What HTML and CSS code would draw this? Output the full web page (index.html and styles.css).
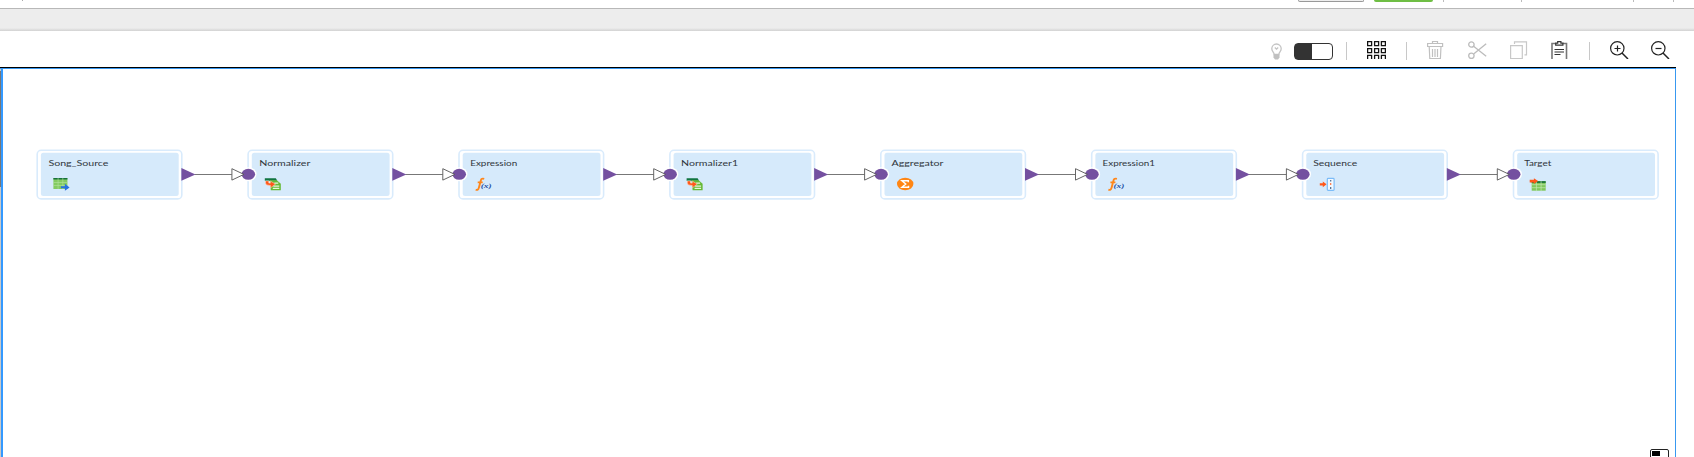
FILE: index.html
```
<!DOCTYPE html>
<html lang="en">
<head>
<meta charset="utf-8">
<title>Mapping designer</title>
<link rel="stylesheet" href="styles.css">
</head>
<body>
<header class="header">
  <i class="tick"></i>
  <i class="btn"></i><i class="btn primary"></i>
  <i class="sep s1"></i><i class="sep s2"></i><i class="sep s3"></i><i class="sep s4"></i>
</header>
<div class="band"></div>
<nav class="toolbar">
  <svg class="bulb" width="11" height="18" viewBox="0 0 11 18" fill="none" stroke="#c4c4c4" stroke-width="1.300"><path d="M3.200 11.500C3 9.200.8 8.300.8 5.700A4.700 4.700 0 0 1 10.200 5.700C10.200 8.300 8 9.200 7.800 11.500ZM3.800 4.500l1.700 1.700 1.700-1.700"/><path d="M2.500 11.300h6v3.200l-1.500 2H4l-1.500-2z" fill="#c0c0c0" stroke="none"/></svg>
  <span class="toggle"></span>
  <i class="divider"></i>
  <svg class="grid" width="19" height="18" viewBox="0 0 19 18" fill="none" stroke="#111" stroke-width="1.300"><path d="M.6.6h4v4h-4zM7.600.6h4v4h-4zM14.400.6h4v4h-4zM.6 7.600h4v4h-4zM7.600 7.600h4v4h-4zM14.400 7.600h4v4h-4zM.6 14.300h4v5h-4zM7.600 14.300h4v5h-4zM14.400 14.300h4v5h-4z"/></svg>
  <i class="divider"></i>
  <svg class="trash" width="17" height="18" viewBox="0 0 17 18" fill="none" stroke="#c0c0c0" stroke-width="1.200"><path d="M.6 2.500h15v3H.6zM5.500 2.500v-2h5v2M2.200 5.500l.6 12.200h10.600l.6-12.200M5.500 8v8M8 8v8M10.500 8v8"/></svg>
  <svg class="cut" width="19" height="18" viewBox="0 0 19 18" fill="none" stroke="#bcbcbc" stroke-width="1.300"><circle cx="3.400" cy="3.500" r="2.700"/><circle cx="3.400" cy="14.800" r="2.700"/><path d="M5.600 5.300l12.600 9.900M5.600 13L18.200 2.700"/></svg>
  <svg class="copy" width="18" height="18" viewBox="0 0 18 18" fill="none" stroke="#c8c8c8" stroke-width="1.200"><path d="M.6 4.600h11.700v13H.6zM4.500 3V.8h12v13h-2"/></svg>
  <svg class="paste" width="17" height="18" viewBox="0 0 17 18" fill="none" stroke="#333" stroke-width="1.200"><path d="M1 18V2.500h3.500M12 2.500h3.500V18" stroke="#777" stroke-width="1.600"/><path d="M4.700 4.200v-2h2V.6h3.200v1.600h2v2zM3.500 8.500h9.500M3.500 11h9.500M3.500 13.500h6"/></svg>
  <i class="divider"></i>
  <svg class="zin" width="19" height="18" viewBox="0 0 19 18" fill="none" stroke="#222" stroke-width="1.200"><circle cx="7.300" cy="7.300" r="6.700"/><path d="M4.500 7.500h6M7.500 4.500v6"/><path d="M12 12l6 6" stroke-width="1.500"/></svg>
  <svg class="zout" width="19" height="18" viewBox="0 0 19 18" fill="none" stroke="#222" stroke-width="1.200"><circle cx="7.300" cy="7.300" r="6.700"/><path d="M4.500 7.500h6"/><path d="M12 12l6 6" stroke-width="1.500"/></svg>
</nav>
<main class="canvas">
  <i class="scroll"></i>
  <svg class="diagram" width="1672" height="388" viewBox="3 69 1672 388">
    <defs>
      <g id="box"><rect x=".8" y=".8" width="144.600" height="48.600" rx="4" fill="#fff" stroke="#d9ebfc" stroke-width="1.600"/><rect x="4.500" y="3.200" width="137.800" height="43.300" rx="2.500" fill="#d6eafb"/></g>
      <g id="link"><path d="M158 25h37.500" stroke="#777"/><path d="M145 18.500v12.800l14-6.400z" fill="#7450a0"/></g>
      <g id="port"><ellipse cx="1" cy="24.800" rx="8.200" ry="7" fill="#fff"/><ellipse cx="1" cy="24.800" rx="6.800" ry="5.500" fill="#7450a0"/><path d="M-15.400 19.200v11.400l12-5.700z" fill="#fff" stroke="#555" stroke-width=".9"/></g>
      <g id="source"><path d="M0 0h14v11H0z" fill="#83cb62"/><path d="M0 0h14v1.500H0z" fill="#16703a"/><path d="M0 4.500h14M0 7.500h14M4.700 0v11M9.400 0v11" stroke="#b4e19d" stroke-width=".6"/><path d="M7.500 8.200h4V5.800l4.700 3.700-4.700 3.200v-2.400h-4z" fill="#2870e3"/></g>
      <g id="norm"><path d="M0 .5h11l1.500 2.500H0z" fill="#117440"/><path d="M5 2.500h7l4 3.500v6.500H6z" fill="#66b936"/><path d="M9.500 5.500h4M8.500 8.500h6M8 10.700h6.500" stroke="#e6f7d9" stroke-width="1.300"/><path d="M.7 3.200v2q0 2.500 4 2.500h1v2.500l5-3.800-5-3v2H4V3.200z" fill="#ff5719" stroke="#ffe8db" stroke-width=".5"/></g>
      <g id="fx"><path d="M9 .9C6 0 5.700 2 5.200 4.200L3.600 10Q3 12.700.5 11.700M2.500 4.500h5" fill="none" stroke="#ff861a" stroke-width="1.900"/><text class="args" x="5.500" y="10.200" textLength="11" lengthAdjust="spacingAndGlyphs">(x)</text></g>
      <g id="agg"><ellipse cx="8.200" cy="6.200" rx="8.200" ry="6.200" fill="#ff8614"/><path d="M11.300 4.500V3H5l3.700 3.200L5 9.500h6.500V8" fill="none" stroke="#fff" stroke-width="1.500"/></g>
      <g id="seq"><path d="M0 5.400h3V3.500l3.800 2.900L3 9.300V7.500H0z" fill="#ff5719"/><rect x="7.500" y=".5" width="6.800" height="12" rx=".8" fill="#f2f9ff" stroke="#7cbcf8" stroke-width="1.200"/><path d="M10.900 2v1.700M10.900 9v2" stroke="#46668b" stroke-width="1.200"/><path d="M10.900 5.200v2" stroke="#ff7544" stroke-width="1.200"/></g>
      <g id="target"><path d="M2 3h14v9.500H2z" fill="#7fc75c"/><path d="M2 3h14v1.700H2z" fill="#16703a"/><path d="M2 6.500h14M2 9.500h14M6.700 3v10M11.400 3v10" stroke="#c4e8b1" stroke-width=".7"/><path d="M0 1.500h4.200V0l4.200 2.900-4.200 2.900V4.200H0z" fill="#ff5719"/></g>
    </defs>
    <g transform="translate(36.400 149.500)"><use href="#box"/><use href="#link"/><text x="12" y="16.400" textLength="60" lengthAdjust="spacingAndGlyphs">Song_Source</text><use href="#source" x="17" y="28.500"/></g>
    <g transform="translate(247.300 149.500)"><use href="#box"/><use href="#link"/><use href="#port"/><text x="12" y="16.400" textLength="51" lengthAdjust="spacingAndGlyphs">Normalizer</text><use href="#norm" x="17.500" y="28.200"/></g>
    <g transform="translate(458.200 149.500)"><use href="#box"/><use href="#link"/><use href="#port"/><text x="12" y="16.400" textLength="47" lengthAdjust="spacingAndGlyphs">Expression</text><use href="#fx" x="17" y="28.400"/></g>
    <g transform="translate(669.100 149.500)"><use href="#box"/><use href="#link"/><use href="#port"/><text x="12" y="16.400" textLength="57" lengthAdjust="spacingAndGlyphs">Normalizer1</text><use href="#norm" x="17.500" y="28.200"/></g>
    <g transform="translate(880 149.500)"><use href="#box"/><use href="#link"/><use href="#port"/><text x="11.500" y="16.400" textLength="52" lengthAdjust="spacingAndGlyphs">Aggregator</text><use href="#agg" x="17" y="28.300"/></g>
    <g transform="translate(1090.900 149.500)"><use href="#box"/><use href="#link"/><use href="#port"/><text x="11.700" y="16.400" textLength="52.500" lengthAdjust="spacingAndGlyphs">Expression1</text><use href="#fx" x="17" y="28.400"/></g>
    <g transform="translate(1301.800 149.500)"><use href="#box"/><use href="#link"/><use href="#port"/><text x="11.500" y="16.400" textLength="44" lengthAdjust="spacingAndGlyphs">Sequence</text><use href="#seq" x="18" y="28.400"/></g>
    <g transform="translate(1512.700 149.500)"><use href="#box"/><use href="#port"/><text x="11.500" y="16.400" textLength="27" lengthAdjust="spacingAndGlyphs">Target</text><use href="#target" x="17" y="28.700"/></g>
  </svg>
  <span class="overview"></span>
</main>
</body>
</html>
```

FILE: styles.css
```
* { box-sizing: border-box; }
body {
  margin: 0;
  height: 457px;
  overflow: hidden;
  background: #fff;
  font-family: Lato, "Liberation Sans", sans-serif;
}
svg { display: block; flex: none; }
.header { display: flex; height: 9px; border-bottom: 1px solid #b8b8b8; }
.header i { flex: none; }
.tick { width: 1px; height: 1px; margin-left: 22px; background: #aaa; }
.btn {
  width: 66px;
  height: 2px;
  margin-left: 1275px;
  background: #eee;
  border: solid #999;
  border-width: 0 1px 1px;
  border-radius: 0 0 2px 2px;
}
.btn.primary { width: 59px; margin-left: 10px; background: #6fbe44; border: 0; }
.sep { width: 1px; height: 2px; background: #bbb; }
.s1 { margin-left: 10px; }
.s2 { margin-left: 77px; }
.s3 { margin-left: 111px; }
.s4 { margin-left: 39px; }
.band { height: 22px; background: linear-gradient(#ededed 19px, #d2d2d2 22px); }
.toolbar {
  display: flex;
  width: 1676px;
  height: 37px;
  padding: 10px 6px 0 0;
  justify-content: flex-end;
  border-bottom: 1px solid #000;
}
.bulb { margin: 2px 12px 0 0; }
.toggle {
  width: 39px;
  height: 17px;
  margin-top: 2px;
  border: 1px solid #333;
  border-radius: 4px;
  background: linear-gradient(90deg, #333 17px, #fff 17px);
}
.divider { width: 1px; height: 18px; margin: 1px 20px 0 13px; background: #c8c8c8; }
.grid { margin-right: 7px; }
.trash { margin-right: 24px; }
.cut { margin-right: 23px; }
.copy { margin-right: 23px; }
.paste { margin-right: 8px; }
.zin { margin-right: 22px; }
.canvas {
  position: relative;
  width: 1676px;
  height: 389px;
  padding-left: 3px;
  border: solid #3898f0;
  border-width: 1px 1px 0 0;
  background: linear-gradient(90deg, #c8c8c8 1px, #3399ff 1px, #3399ff 3px, #fff 3px);
}
.scroll { position: absolute; left: 0; top: 2px; width: 1px; height: 116px; background: #777; }
.diagram text { font-size: 8px; fill: #30363c; }
.diagram .args { font: italic bold 7px "Liberation Serif", serif; fill: #2451a6; }
.overview {
  position: absolute;
  left: 1650px;
  top: 380px;
  width: 19px;
  height: 12px;
  border: 1px solid #222;
  border-radius: 2px;
  background: linear-gradient(#000, #000) 1px 1px / 8px 5px no-repeat #fff;
}
```
